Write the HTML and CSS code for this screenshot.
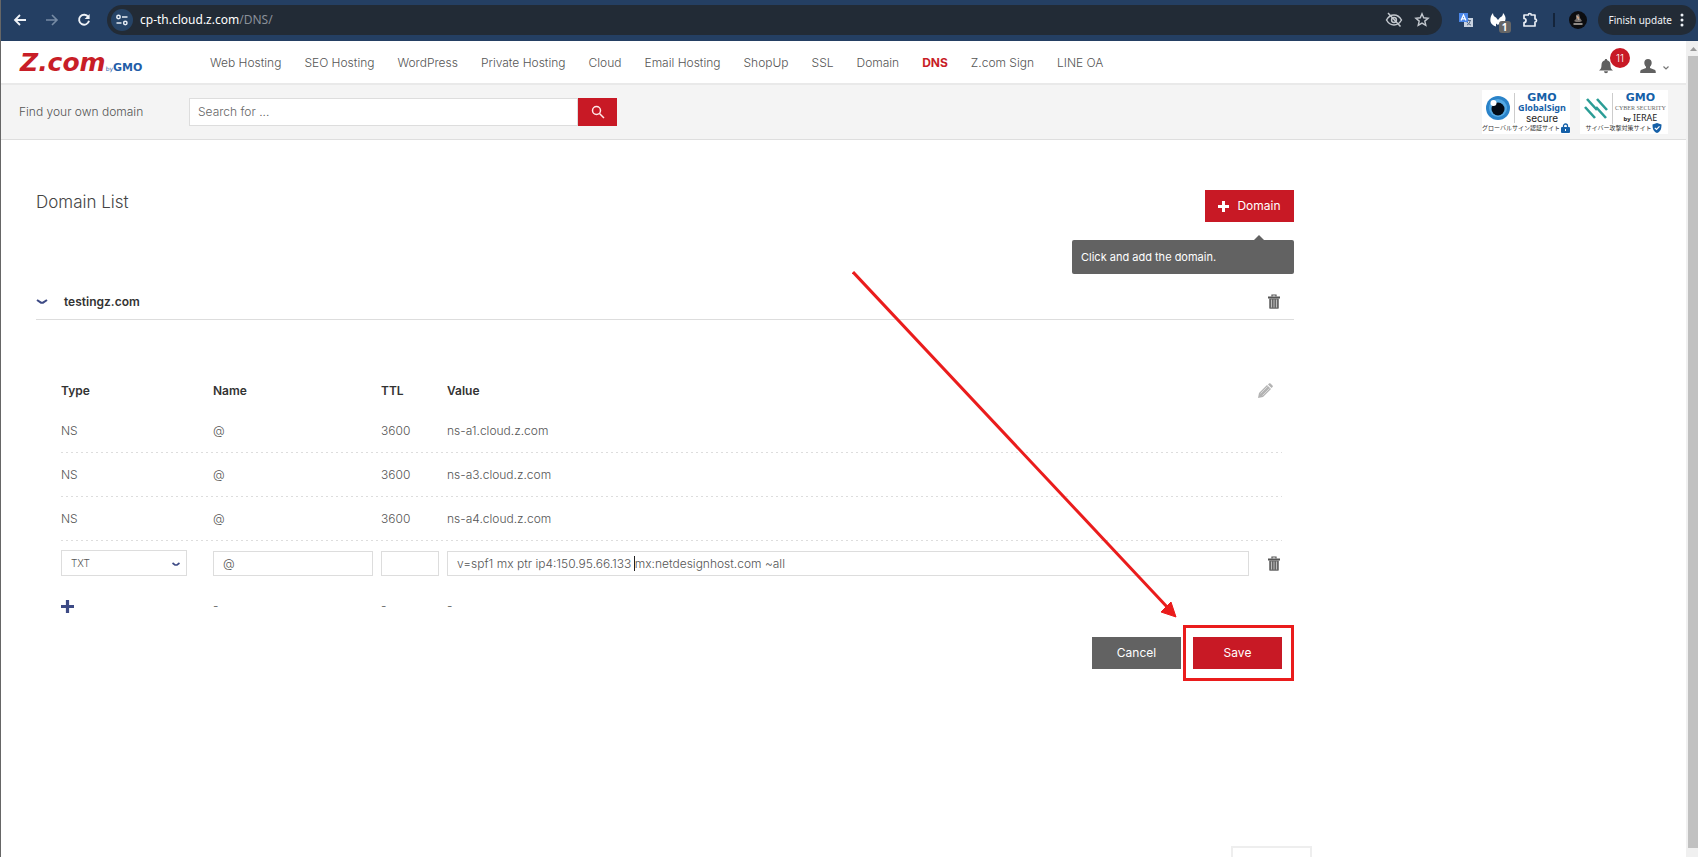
FILE: index.html
```html
<!DOCTYPE html>
<html lang="en">
<head>
<meta charset="utf-8">
<title>DNS - Z.com</title>
<link rel="stylesheet" href="styles.css">
</head>
<body>
<div class="browser">
  <div class="toolbar">
    <div class="tool-nav">
      <button class="tool" aria-label="Back"><svg width="16" height="16" viewBox="0 0 16 16"><path d="M14 8H3M8 3L3 8l5 5" fill="none" stroke="#eef2f7" stroke-width="1.8"/></svg></button>
      <button class="tool" aria-label="Forward"><svg width="16" height="16" viewBox="0 0 16 16"><path d="M2 8h11M8 3l5 5-5 5" fill="none" stroke="#768ba5" stroke-width="1.6"/></svg></button>
      <button class="tool" aria-label="Reload"><svg width="16" height="16" viewBox="0 0 16 16"><path d="M12.3 5A5 5 0 1 0 13 8.8" fill="none" stroke="#eef2f7" stroke-width="1.9"/><path d="M13.6 2v5H8.6z" fill="#eef2f7"/></svg></button>
    </div>
    <div class="address">
      <button class="site-info" aria-label="Site information"><svg width="14" height="14" viewBox="0 0 14 14" fill="none" stroke="#e6edf5" stroke-width="1.5"><circle cx="3.5" cy="4" r="1.7"/><path d="M7 4h5.500M1.500 10h5"/><circle cx="10.300" cy="10" r="1.700"/></svg></button>
      <span class="url">cp-th.cloud.z.com<span class="path">/DNS/</span></span>
      <button class="tool" aria-label="Tracking protection"><svg width="18" height="18" viewBox="0 0 18 18" fill="none" stroke="#c3c8ce" stroke-width="1.5"><path d="M1.500 9C3.500 5.500 6 4 9 4s5.500 1.500 7.500 5c-2 3.500-4.500 5-7.500 5S3.500 12.500 1.500 9z"/><circle cx="9" cy="9" r="2.400"/><path d="M3 2l12.500 13.500"/></svg></button>
      <button class="tool" aria-label="Bookmark"><svg width="16" height="16" viewBox="0 0 16 16" fill="none" stroke="#c3c8ce" stroke-width="1.400"><path d="M8 1.800l1.700 4 4.400.4-3.300 2.900 1 4.300L8 11.100l-3.800 2.300 1-4.300-3.300-2.900 4.400-.4z"/></svg></button>
    </div>
    <div class="extensions">
      <button class="tool" aria-label="Translate"><svg width="16" height="16" viewBox="0 0 16 16"><rect x="6" y="6" width="9" height="9" fill="#c8d2e0"/><path d="M8 8.500h5M10.500 7.500v1M9 13c2-1 3-2.500 3-4.500M9 10c.8 1.500 2 2.500 4 3" fill="none" stroke="#536784"/><rect x="1" y="1" width="9" height="9" fill="#4a86e8"/><path d="M3 8.500L5.500 3 8 8.500M4 6.800h3" fill="none" stroke="#fff" stroke-width="1.200"/></svg></button>
      <button class="tool ext-guard" aria-label="Guard"><svg width="16" height="14" viewBox="0 0 16 14"><path d="M3 0c0 2 1 3.500 3 4.500L8 7l2-2.500c2-1 3-2.500 3-4.500 2.500 2.500 3.500 6 1.500 9-1 1.500-2 2-3 2.500L11 8.500 8 12l-2-1.500v3C3 12.500 1 11 .500 8.500 0 5.500 1 2 3 0z" fill="#fff"/></svg><span class="ext-count">1</span></button>
      <button class="tool" aria-label="Extensions"><svg width="16" height="16" viewBox="0 0 16 16"><path d="M2 3h4.300a1.500 1.500 0 0 1 3 0H13v4a1.500 1.500 0 0 1 0 3v4H2v-3.500a2 2 0 0 0 0-4z" fill="none" stroke="#e9eef5" stroke-width="1.700" stroke-linejoin="round"/></svg></button>
      <span class="divider"></span>
      <button class="tool" aria-label="Profile"><svg width="18" height="18" viewBox="0 0 18 18"><circle cx="9" cy="9" r="9" fill="#0c0d10"/><path d="M7 4l3-1 1 4 2 3-2 1H7l-2-1 2-2z" fill="#77716e"/><path d="M4.500 13h9M8 5l2 4" stroke="#b9b4ad" stroke-width="1.300"/><circle cx="9" cy="6.500" r="1" fill="#d8a27d"/></svg></button>
      <button class="update">Finish update<svg width="4" height="14" viewBox="0 0 4 14" fill="#eef2f7"><circle cx="2" cy="2" r="1.500"/><circle cx="2" cy="7" r="1.500"/><circle cx="2" cy="12" r="1.500"/></svg></button>
    </div>
  </div>

  <div class="viewport">
    <div class="page">
      <header class="site-header">
        <a class="logo" href="#"><span class="logo-z">Z.com</span><span class="logo-by">by</span><span class="logo-gmo">GMO</span></a>
        <nav class="site-nav">
          <a href="#">Web Hosting</a><a href="#">SEO Hosting</a><a href="#">WordPress</a><a href="#">Private Hosting</a><a href="#">Cloud</a><a href="#">Email Hosting</a><a href="#">ShopUp</a><a href="#">SSL</a><a href="#">Domain</a><a href="#" class="active">DNS</a><a href="#">Z.com Sign</a><a href="#">LINE OA</a>
        </nav>
        <div class="account">
          <button class="bell" aria-label="Notifications"><svg width="14" height="16" viewBox="0 0 14 16" fill="#616161"><path d="M7 1c.8 0 1.200.500 1.200 1.300C10.500 3 11.500 4.800 11.500 7c0 3 .8 4.300 2.500 5.500H0C1.700 11.300 2.500 10 2.500 7c0-2.200 1-4 3.300-4.700C5.800 1.500 6.200 1 7 1zM5 13.200h4a2 2 0 0 1-4 0z"/></svg><span class="bell-count">11</span></button>
          <button class="user" aria-label="Account"><svg width="16" height="16" viewBox="0 0 16 16" fill="#616161"><path d="M8 1c2.300 0 3.700 1.500 3.700 3.700 0 1.800-.8 3-1.700 4v1.300l4.500 1.700c1 .4 1.300 1 1.300 3.300H.2c0-2.300.3-2.900 1.300-3.300L6 10V8.700c-.9-1-1.700-2.200-1.700-4C4.300 2.500 5.700 1 8 1z"/></svg><svg class="user-arrow" width="6" height="4" viewBox="0 0 6 4"><path d="M.5.500L3 3 5.500.500" fill="none" stroke="#777" stroke-width="1.200"/></svg></button>
        </div>
      </header>

      <div class="search-band">
        <label class="search-label" for="search">Find your own domain</label>
        <form class="search">
          <input id="search" type="text" placeholder="Search for ...">
          <button type="button" aria-label="Search"><svg width="14" height="14" viewBox="0 0 14 14" fill="none" stroke="#ffe9e9" stroke-width="1.500"><circle cx="5.500" cy="5.500" r="4"/><path d="M8.500 8.500l4.500 4.500"/></svg></button>
        </form>
        <div class="seals">
          <div class="seal">
            <div class="seal-main">
              <svg width="26" height="26" viewBox="0 0 26 26"><circle cx="13" cy="13" r="12" fill="#2a83c9"/><circle cx="13" cy="13" r="9" fill="#53a8e2"/><circle cx="13" cy="14" r="6.500" fill="#020b16"/><circle cx="8.500" cy="8" r="3" fill="#fff"/></svg>
              <div class="seal-text"><span class="gmo">GMO</span><span class="globalsign">GlobalSign</span><span class="secure">secure</span></div>
            </div>
            <div class="seal-foot">グローバルサイン認証サイト<svg width="9" height="10" viewBox="0 0 9 10"><path d="M2.500 5V3a2 2 0 0 1 4 0v2" fill="none" stroke="#1560a8" stroke-width="1.300"/><rect y="4" width="9" height="6" rx="1" fill="#1560a8"/><path d="M4.500 6v2" stroke="#fff"/></svg></div>
          </div>
          <div class="seal">
            <div class="seal-main">
              <svg width="26" height="26" viewBox="0 0 26 26" stroke="#2b9d96" stroke-width="2.600"><path d="M4 4l10 11M14 4l10 11M2 12l10 11M13 12l10 11"/></svg>
              <div class="seal-text"><span class="gmo">GMO</span><span class="cyber">CYBER SECURITY</span><span class="ierae"><b>by</b> IERAE</span></div>
            </div>
            <div class="seal-foot">サイバー攻撃対策サイト<svg width="10" height="10" viewBox="0 0 10 10"><path d="M5 0l4.500 1.500C9.500 6 8.500 8.500 5 10 1.500 8.500.500 6 .500 1.500z" fill="#1560a8"/><path d="M2.800 4.800l1.700 1.700 3-3.200" fill="none" stroke="#fff" stroke-width="1.200"/></svg></div>
          </div>
        </div>
      </div>

      <main class="content">
        <div class="title-row">
          <h1>Domain List</h1>
          <div class="add-domain">
            <button class="btn btn-red"><svg width="11" height="11" viewBox="0 0 11 11"><path d="M5.500 0v11M0 5.500h11" stroke="#fff" stroke-width="3"/></svg>Domain</button>
            <div class="tip" role="tooltip">Click and add the domain.</div>
          </div>
        </div>

        <div class="domain-row">
          <button class="plain" aria-label="Collapse"><svg width="12" height="6" viewBox="0 0 12 6"><path d="M1 1l4 2.700h2L11 1" fill="none" stroke="#3d4a85" stroke-width="2"/></svg></button>
          <h2>testingz.com</h2>
          <button class="plain" aria-label="Delete domain"><svg class="trash" width="12" height="15" viewBox="0 0 12 15"><use href="#trash"/></svg></button>
        </div>

        <table class="records">
          <colgroup><col class="c-type"><col class="c-name"><col class="c-ttl"><col><col class="c-act"></colgroup>
          <thead>
            <tr><th>Type</th><th>Name</th><th>TTL</th><th>Value</th><th class="edit"><button class="plain" aria-label="Edit"><svg width="16" height="16" viewBox="0 0 16 16"><path d="M1 15l1-5 8-8 4 4-8 8zM11 1.500l1-1c.5-.5 1-.5 1.500 0L15.500 2.500c.5.500.5 1 0 1.500l-1 1z" fill="#b3b3b3"/><path d="M3.500 10.500l7-7M5.500 12.500l7-7" stroke="#e2e2e2" stroke-width=".8"/></svg></button></th></tr>
          </thead>
          <tbody>
            <tr class="rec"><td>NS</td><td>@</td><td>3600</td><td>ns-a1.cloud.z.com</td><td></td></tr>
            <tr class="rec"><td>NS</td><td>@</td><td>3600</td><td>ns-a3.cloud.z.com</td><td></td></tr>
            <tr class="rec"><td>NS</td><td>@</td><td>3600</td><td>ns-a4.cloud.z.com</td><td></td></tr>
            <tr class="form-row">
              <td><div class="select"><select aria-label="Type"><option>TXT</option></select><svg width="8" height="5" viewBox="0 0 8 5"><path d="M.5 1l2.500 2h2L7.500 1" fill="none" stroke="#3d4a85" stroke-width="1.700"/></svg></div></td>
              <td><input class="in-name" type="text" aria-label="Name" value="@"></td>
              <td><input class="in-ttl" type="text" aria-label="TTL"></td>
              <td><div class="value"><input type="text" aria-label="Value" value="v=spf1 mx ptr ip4:150.95.66.133 mx:netdesignhost.com ~all"><span class="caret"></span></div></td>
              <td class="del"><button class="plain" aria-label="Delete record"><svg class="trash" width="12" height="15" viewBox="0 0 12 15"><use href="#trash"/></svg></button></td>
            </tr>
            <tr class="new-row"><td><button class="plain" aria-label="Add record"><svg width="13" height="13" viewBox="0 0 13 13"><path d="M6.500 0v13M0 6.500h13" stroke="#3d4a85" stroke-width="3.200"/></svg></button></td><td>-</td><td>-</td><td>-</td><td></td></tr>
          </tbody>
        </table>

        <div class="actions">
          <button class="btn btn-gray">Cancel</button>
          <div class="highlight"><button class="btn btn-red">Save</button></div>
        </div>

        <svg class="pointer" width="330" height="350" viewBox="0 0 330 350"><path d="M1 1L317 338" stroke="#ea1c1c" stroke-width="3"/><path d="M324 346l-15-5 10-10z" fill="#ea1c1c" stroke="#ea1c1c"/></svg>
      </main>
      <div class="bottom-box"></div>
    </div>
    <div class="scrollbar"><svg width="12" height="15" viewBox="0 0 12 15"><path d="M4 10l3.500-4 3.500 4z" fill="#999"/></svg><div class="thumb"></div></div>
  </div>
</div>
<svg class="defs" width="0" height="0"><symbol id="trash" viewBox="0 0 12 15"><path d="M4 2.500V1h4v1.500" fill="none" stroke="#555" stroke-width="1.200"/><path d="M0 2.500h12v2H0z" fill="#555"/><path d="M1.200 4.500h9.600V14q0 .8-.8.800H2q-.8 0-.8-.8z" fill="#666"/><path d="M3.500 5.500v8M6 5.500v8M8.500 5.500v8" stroke="#bcbcbc"/></symbol></svg>
</body>
</html>
```
FILE: styles.css
```css
* { box-sizing: border-box; }
body {
  margin: 0;
  background: #fff;
  color: #555;
  font: 300 12px/16px "Century Gothic", Inter, sans-serif;
}
button, input, select { font: inherit; color: inherit; margin: 0; }
button { border: 0; background: none; padding: 0; cursor: pointer; }
a { color: inherit; text-decoration: none; }
svg { display: block; flex: none; }
.defs { position: absolute; }

.browser { display: flex; flex-direction: column; height: 100vh; overflow: hidden; border-left: 1px solid #666; }

/* Browser toolbar */
.toolbar { display: flex; align-items: center; height: 41px; flex: none; padding: 0 2px 2px 7px; background: #243f63; }
.tool-nav { display: flex; gap: 8px; }
.tool { display: flex; align-items: center; justify-content: center; width: 24px; height: 24px; }
.address { display: flex; align-items: center; flex: 1; height: 30px; margin-left: 11px; padding: 0 8px 0 4px; border-radius: 15px; background: #222b36; }
.site-info { display: flex; align-items: center; justify-content: center; width: 22px; height: 22px; border-radius: 50%; background: #264467; }
.url { flex: 1; margin-left: 7px; color: #fff; font: 400 12px/16px "Segoe UI", "Noto Sans", sans-serif; }
.path { color: #8a9099; }
.address .tool + .tool { margin-left: 4px; }
.extensions { display: flex; align-items: center; gap: 8px; margin-left: 12px; }
.ext-guard { position: relative; }
.ext-count { position: absolute; right: -1px; bottom: -1px; width: 12px; height: 12px; border-radius: 3px; background: #666; color: #fff; font: bold 10px/12px "Noto Sans", sans-serif; text-align: center; }
.divider { width: 2px; height: 14px; margin: 0 3px; background: #14243a; }
.update { display: flex; align-items: center; gap: 8px; height: 30px; padding: 0 12px 0 11px; border-radius: 15px; background: #222b36; color: #f0f3f7; font: 400 10px/16px "Segoe UI", "Noto Sans", sans-serif; white-space: nowrap; }

/* Page and scrollbar */
.viewport { display: flex; flex: 1; min-height: 0; }
.page { display: flex; flex-direction: column; flex: 1; min-width: 0; }
.scrollbar { display: flex; flex-direction: column; width: 12px; padding-bottom: 9px; background: #f0f0f0; }
.thumb { flex: 1; margin-left: 2px; background: #c1c1c1; }

/* Header */
.site-header { display: flex; align-items: center; height: 44px; flex: none; padding: 2px 17px 0 19px; border-bottom: 2px solid #e9e9e9; }
.logo { display: flex; align-items: baseline; width: 190px; font-family: "DejaVu Sans", sans-serif; font-weight: bold; color: #1f5ea8; }
.logo-z { color: #c81e27; font-size: 25px; line-height: 24px; font-style: italic; }
.logo-by { font-size: 6px; line-height: 8px; font-weight: normal; }
.logo-gmo { font-size: 11px; line-height: 12px; }
.site-nav { display: flex; flex: 1; gap: 23px; white-space: nowrap; }
.site-nav .active { color: #c81e27; font-weight: bold; }
.account { display: flex; align-items: center; gap: 27px; margin-top: 5px; }
.bell { position: relative; }
.bell-count { position: absolute; left: 11px; bottom: 6px; width: 20px; height: 20px; border-radius: 50%; background: #c81925; color: #fff; font-size: 10px; line-height: 20px; text-align: center; }
.user { display: flex; align-items: center; gap: 7px; }
.user-arrow { margin-top: 4px; }

/* Domain search */
.search-band { display: flex; align-items: center; height: 55px; flex: none; padding: 0 18px 0 18px; border-bottom: 1px solid #dedede; background: #f4f4f4; }
.search-label { width: 170px; }
.search { display: flex; width: 428px; height: 28px; }
.search input { flex: 1; min-width: 0; padding: 0 8px; border: 1px solid #ddd; background: #fff; }
.search input::placeholder { color: #666; opacity: 1; }
.search button { display: flex; align-items: center; justify-content: center; width: 39px; background: #c81925; }
.seals { display: flex; gap: 10px; margin-left: auto; }
.seal { width: 88px; height: 44px; padding: 3px 3px 1px; background: #fff; }
.seal-main { display: flex; align-items: center; gap: 3px; height: 30px; }
.seal-text { display: flex; flex-direction: column; align-items: center; flex: 1; padding-left: 2px; border-left: 1px solid #ccc; white-space: nowrap; }
.gmo { color: #1560a8; font: bold 11px/10px "DejaVu Sans", sans-serif; }
.globalsign { color: #1560a8; font: bold 9px/10px "Noto Sans", sans-serif; }
.secure { color: #222; font: 10px/10px Inter, sans-serif; }
.cyber { color: #666; font: 6px/10px "Liberation Serif", serif; }
.ierae { color: #222; font: 9px/10px "Noto Sans", sans-serif; }
.ierae b { font-size: 6px; }
.seal-foot { display: flex; align-items: center; justify-content: center; gap: 1px; height: 10px; color: #333; font: 6px/10px "Noto Sans CJK JP", sans-serif; white-space: nowrap; }

/* Domain list */
.content { position: relative; max-width: 1293px; padding: 50px 0 0 35px; }
.title-row { display: flex; justify-content: space-between; height: 87px; }
h1 { margin: 1px 0 0; color: #444; font-size: 17px; line-height: 22px; font-weight: 300; }
.btn { display: flex; align-items: center; justify-content: center; gap: 8px; width: 89px; height: 32px; color: #fff; font-weight: 400; }
.btn-red { background: #c81925; }
.btn-gray { background: #626262; }
.add-domain { position: relative; }
.tip { position: absolute; top: 50px; right: 0; width: 222px; padding: 9px; border-radius: 2px; background: #626262; color: #fff; font-size: 11px; font-weight: 400; }
.tip::before { content: ""; position: absolute; top: -5px; right: 30px; border: 5px solid transparent; border-top: 0; border-bottom-color: #626262; }
.plain { display: block; }
.domain-row { display: flex; align-items: center; height: 43px; padding: 7px 14px 0 0; border-bottom: 1px solid #ddd; }
h2 { flex: 1; margin: 0 0 0 16px; color: #333; font-size: 12px; line-height: 16px; font-weight: 600; }

/* DNS records */
.records { width: calc(100% - 37px); margin: 53px 12px 0 25px; border-collapse: collapse; table-layout: fixed; }
.c-type { width: 152px; }
.c-name { width: 168px; }
.c-ttl { width: 66px; }
.c-act { width: 33px; }
th, td { padding: 0; text-align: left; }
th { height: 36px; color: #333; font-weight: 600; }
.edit .plain { margin-left: 8px; }
.rec td { height: 44px; }
.rec { background: repeating-linear-gradient(90deg, #ddd 0 2px, transparent 2px 5px) bottom / 100% 1px no-repeat; }
.form-row td { height: 44px; }
.select { position: relative; width: 126px; }
.select select { appearance: none; display: block; width: 100%; height: 26px; padding: 0 9px; border: 1px solid #ddd; border-radius: 0; background: #fff; font-size: 10px; }
.select svg { position: absolute; right: 7px; top: 12px; }
.records input { display: block; width: 100%; height: 25px; padding: 0 9px; border: 1px solid #ddd; background: #fff; }
.records .in-name { width: 160px; }
.records .in-ttl { width: 58px; }
.value { position: relative; }
.caret { position: absolute; left: 187px; top: 5px; width: 1px; height: 15px; background: #222; }
.del .plain { margin-left: 19px; }
.new-row td { height: 42px; }

.actions { display: flex; justify-content: flex-end; align-items: center; gap: 2px; margin-top: -2px; }
.highlight { padding: 9px 9px 9px 7px; border: 3px solid #ea1c1c; }
.pointer { position: absolute; left: 851px; top: 131px; }
.bottom-box { width: 81px; height: 11px; margin: auto 374px 0 auto; border: 2px solid #eee; border-bottom: 0; }
```
